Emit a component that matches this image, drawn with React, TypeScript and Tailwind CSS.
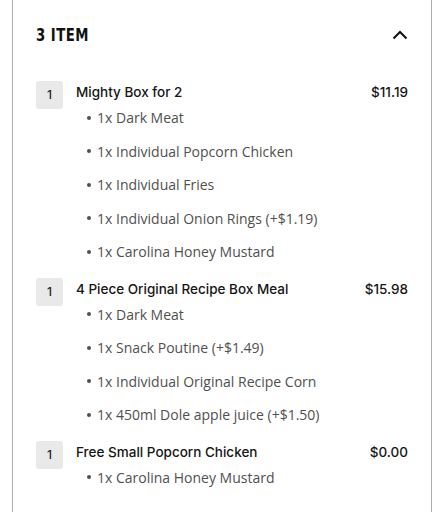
import React from "react";

type Item = { qty: number; name: string; price: string; subs: string[] };

const items: Item[] = [
  {
    qty: 1,
    name: "Mighty Box for 2",
    price: "$11.19",
    subs: [
      "1x Dark Meat",
      "1x Individual Popcorn Chicken",
      "1x Individual Fries",
      "1x Individual Onion Rings (+$1.19)",
      "1x Carolina Honey Mustard",
    ],
  },
  {
    qty: 1,
    name: "4 Piece Original Recipe Box Meal",
    price: "$15.98",
    subs: [
      "1x Dark Meat",
      "1x Snack Poutine (+$1.49)",
      "1x Individual Original Recipe Corn",
      "1x 450ml Dole apple juice (+$1.50)",
    ],
  },
  {
    qty: 1,
    name: "Free Small Popcorn Chicken",
    price: "$0.00",
    subs: ["1x Carolina Honey Mustard"],
  },
];

export default function App() {
  return (
    <div
      className="w-[444px] h-[512px] overflow-hidden bg-white"
      style={{ fontFamily: "'Open Sans', 'Noto Sans', sans-serif" }}
    >
      <div className="mx-[12px] h-[560px] border-x border-[#adadad] px-[23px]">
        <div className="flex items-center justify-between pt-[26px] h-[44px]">
          <span
            className="inline-block origin-left scale-x-[0.78] text-[17px] leading-[18px] font-bold tracking-[0.6px] text-[#111]"
            style={{ fontFamily: "'DejaVu Sans', sans-serif" }}
          >
            3 ITEM
          </span>
          <svg width="16" height="10" viewBox="0 0 16 10">
            <polyline
              points="1.5,8.5 8,2 14.5,8.5"
              fill="none"
              stroke="#111"
              strokeWidth="2"
            />
          </svg>
        </div>
        <div className="mt-[38px] flex flex-col gap-[10px]">
          {items.map((it, i) => (
            <div key={i} className="flex items-start">
              <div
                className="w-[27px] h-[28px] mt-[-1px] rounded-[3px] bg-[#e9e9e9] flex items-center justify-center text-[12px] text-[#222] font-medium"
                style={{ fontFamily: "Inter, sans-serif" }}
              >
                {it.qty}
              </div>
              <div className="ml-[13px] flex-1">
                <div
                  className="flex justify-between text-[13.5px] leading-[20px] font-medium text-[#161616]"
                  style={{ fontFamily: "Inter, sans-serif" }}
                >
                  <span>{it.name}</span>
                  <span>{it.price}</span>
                </div>
                <ul className="mt-[-1px] ml-[11px]">
                  {it.subs.map((s, j) => (
                    <li
                      key={j}
                      className="flex items-center text-[14px] leading-[33.5px] text-[#505050]"
                    >
                      <span className="w-[4px] h-[4px] rounded-full bg-[#505050] mr-[6px]" />
                      {s}
                    </li>
                  ))}
                </ul>
              </div>
            </div>
          ))}
        </div>
      </div>
    </div>
  );
}
